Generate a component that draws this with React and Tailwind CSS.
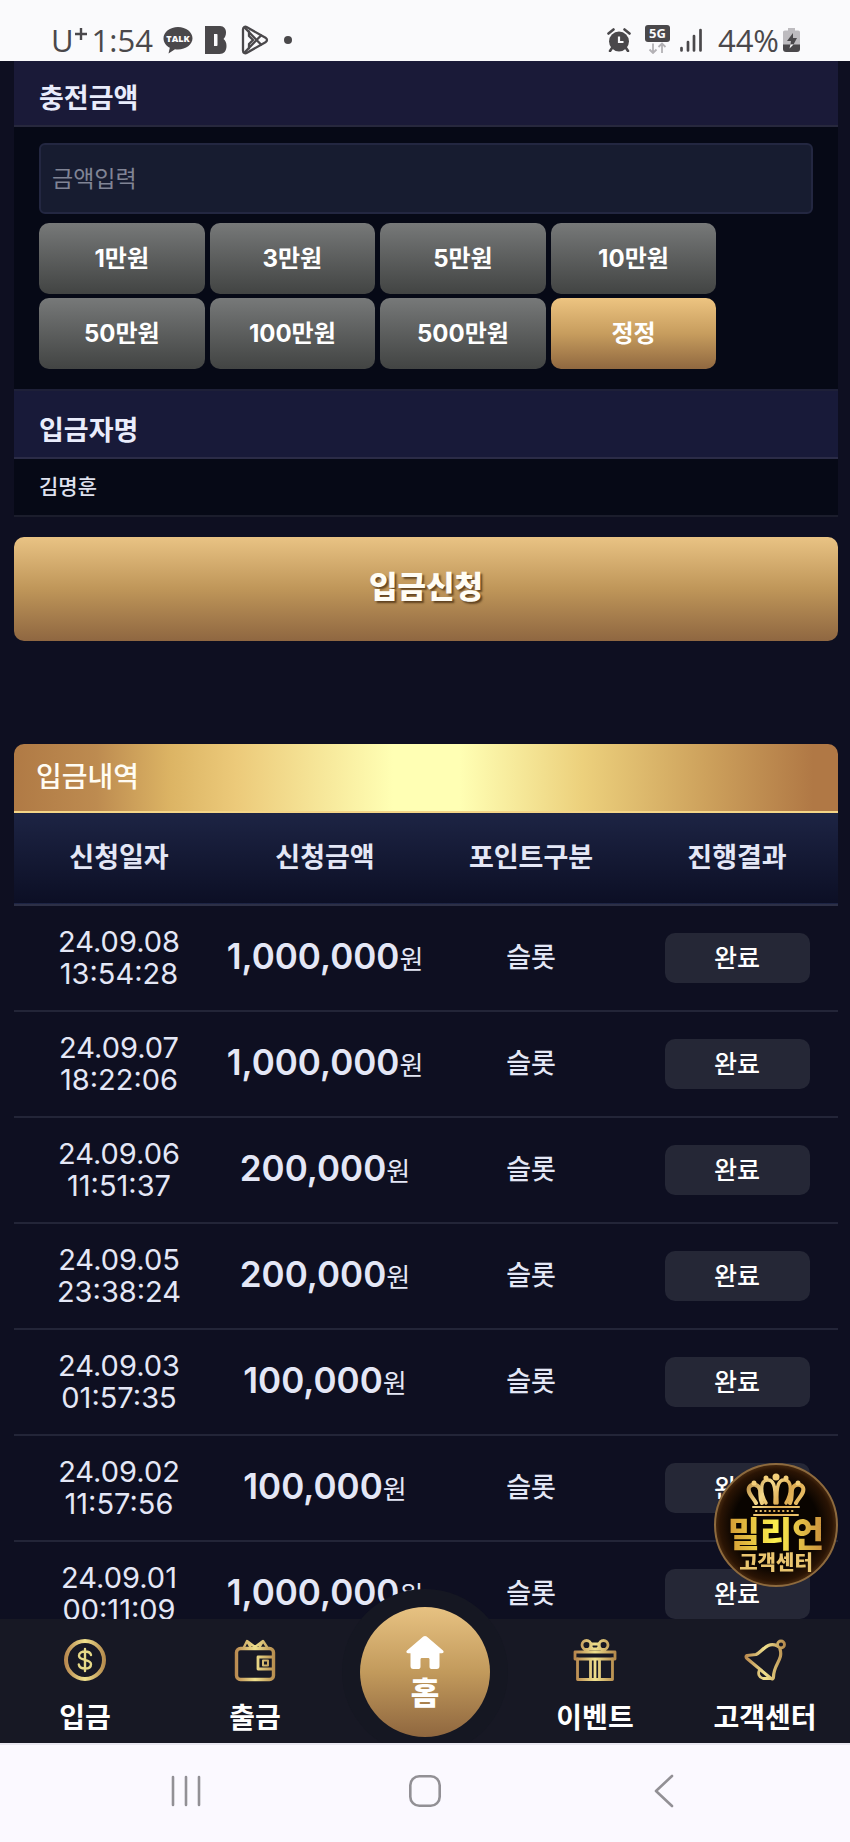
import React, { useState } from 'react';

const AMOUNTS = [
  { label: '1만원', value: 10000 },
  { label: '3만원', value: 30000 },
  { label: '5만원', value: 50000 },
  { label: '10만원', value: 100000 },
  { label: '50만원', value: 500000 },
  { label: '100만원', value: 1000000 },
  { label: '500만원', value: 5000000 },
];

const HISTORY = [
  { date: '24.09.08', time: '13:54:28', amount: '1,000,000' },
  { date: '24.09.07', time: '18:22:06', amount: '1,000,000' },
  { date: '24.09.06', time: '11:51:37', amount: '200,000' },
  { date: '24.09.05', time: '23:38:24', amount: '200,000' },
  { date: '24.09.03', time: '01:57:35', amount: '100,000' },
  { date: '24.09.02', time: '11:57:56', amount: '100,000' },
  { date: '24.09.01', time: '00:11:09', amount: '1,000,000' },
];

function StatusBar() {
  return (
    <header className="flex h-[61px] shrink-0 items-end justify-between bg-[#fafafc] pr-[50px] pb-[3px] pl-[51px] font-['Open_Sans','Noto_Sans_CJK_KR',sans-serif] text-[31px] leading-9 text-[#4a484b]">
      <div className="flex items-center">
        <span>U</span>
        <svg className="mb-3 h-[14px] w-[14px]" viewBox="0 0 14 14" fill="none" stroke="currentColor" strokeWidth="2.4">
          <path d="M7 1v12M1 7h12" />
        </svg>
        <span className="ml-1">1:54</span>
        <svg className="ml-[10px] h-7 w-[30px]" viewBox="0 0 30 28">
          <path d="M15 1C7 1 .5 6 .5 12.300c0 4 2.500 7.500 6.300 9.500L5.500 27.500l6.500-4.200c1 .1 2 .2 3 .2 8 0 14.500-5 14.500-11.200S23 1 15 1z" fill="currentColor" />
          <text x="15" y="16" textAnchor="middle" fontSize="9" fontWeight="800" fill="#fafafc">TALK</text>
        </svg>
        <svg className="ml-3 h-7 w-[22px]" viewBox="0 0 22 28">
          <path fillRule="evenodd" d="M0 0h15c4 0 6 3 6 6.500 0 3-1 5-2.500 6.500 2 1.500 3 4 3 7 0 5-2.500 8-7 8H0zM9 8v12h2.500c1 0 1-.6 1-1.500V9.500c0-1 0-1.500-1-1.500z" fill="currentColor" />
        </svg>
        <svg className="ml-[14px] h-[30px] w-7" viewBox="0 0 28 30" fill="none" stroke="currentColor" strokeWidth="2.3" strokeLinejoin="round" strokeLinecap="round">
          <path d="M2 4.500v21c0 2.500 2 3.500 4 2.300l18.500-10.600c2-1.200 2-3.200 0-4.400L6 2.200C4 1 2 2 2 4.500z" />
          <path d="M4 3l16 16.500M4 27l16-16.500M8 6.500V11l4 4-4 4v4.500" />
        </svg>
        <span className="ml-[15px] h-2 w-2 rounded-full bg-[#4a484b]" />
      </div>
      <div className="flex items-center">
        <svg className="h-6 w-6" viewBox="0 0 24 24" fill="none" stroke="currentColor">
          <circle cx="12" cy="13.500" r="10" fill="currentColor" stroke="none" />
          <path d="M1.500 5.500l5-4M22.500 5.500l-5-4" strokeWidth="2.600" strokeLinecap="round" />
          <path d="M5 20l-2 3M19 20l2 3" strokeWidth="2.600" strokeLinecap="round" />
          <path d="M12 8.500v5.500h4.500" stroke="#fafafc" strokeWidth="2.200" />
        </svg>
        <svg className="mb-1 ml-[14px] h-8 w-[25px]" viewBox="0 -4 25 32">
          <rect y="-1" width="25" height="17" rx="3" fill="currentColor" />
          <text x="12.500" y="12" textAnchor="middle" fontSize="13" fontWeight="700" fill="#fafafc">5G</text>
          <path d="M8 17.500v9M4.500 23.500L8 27l3.500-3.500M17 27v-9M13.500 21l3.500-3.500 3.500 3.500" fill="none" stroke="#b3b1b5" strokeWidth="1.800" />
        </svg>
        <svg className="ml-[10px] h-6 w-[22px]" viewBox="0 0 22 24" stroke="currentColor" strokeWidth="2.700" strokeLinecap="round">
          <path d="M1.500 20v2.500M8 14v8.500M14 8v14.500M20.500 2v20.500" />
        </svg>
        <span className="ml-4">44%</span>
        <svg className="ml-1 h-6 w-[17px]" viewBox="0 0 17 24">
          <path d="M5 0h7v2.500h3c1.500 0 2 .8 2 2V17H0V4.500c0-1.200.5-2 2-2h3z" fill="#bdbbbf" />
          <path d="M0 16.500h17V21c0 2-1 3-3 3H3c-2 0-3-1-3-3z" fill="currentColor" />
          <path d="M10 5L4 13h4l-.5 3.500h3L14 10h-4z" fill="currentColor" />
          <path d="M7.500 16.500l-1 4 4-4z" fill="#fafafc" />
        </svg>
      </div>
    </header>
  );
}

function GoldDefs() {
  return (
    <svg className="absolute h-0 w-0" aria-hidden="true">
      <defs>
        <linearGradient id="gold" x1="0" y1="0" x2="40" y2="0" gradientUnits="userSpaceOnUse">
          <stop offset="0" stopColor="#b8874e" />
          <stop offset="0.5" stopColor="#efe08d" />
          <stop offset="1" stopColor="#b58a4c" />
        </linearGradient>
        <linearGradient id="crown" x1="0" y1="0" x2="60" y2="44" gradientUnits="userSpaceOnUse">
          <stop offset="0" stopColor="#a8742a" />
          <stop offset="0.35" stopColor="#f5d98b" />
          <stop offset="0.6" stopColor="#dca94f" />
          <stop offset="1" stopColor="#f3cf78" />
        </linearGradient>
      </defs>
    </svg>
  );
}

function TabIcon({ children }) {
  return (
    <svg className="h-11 w-11" viewBox="-2 -2 44 44" fill="none" stroke="url(#gold)" strokeWidth="2.800" strokeLinejoin="round" strokeLinecap="round">
      {children}
    </svg>
  );
}

function TabLink({ label, children }) {
  return (
    <a href="#" className="flex flex-1 flex-col items-center gap-[18px] pt-[19px]">
      {children}
      <span className="text-[28px] leading-9 font-bold text-white">{label}</span>
    </a>
  );
}

function TabBar() {
  return (
    <nav className="relative flex h-[124px] shrink-0 bg-[#171824]">
      <TabLink label="입금">
        <TabIcon>
          <circle cx="20" cy="20" r="19" strokeWidth="4" />
          <path d="M20 9v22M26 15c-.5-2.500-3-3.500-6-3.500s-6 1.200-6 4.200c0 5.500 12 2.800 12 8.500 0 3-3 4.300-6 4.300s-5.800-1.200-6.200-4" strokeWidth="2.400" stroke="#e6d988" />
        </TabIcon>
      </TabLink>
      <TabLink label="출금">
        <TabIcon>
          <rect x="1.500" y="8.500" width="37" height="31" rx="4" strokeWidth="3.400" />
          <path d="M9 7l3-6 8 6 8-6 4 6M13 3l3 5M27 3l-3 5" strokeWidth="2.400" />
          <path d="M38 17H23v12h15" />
          <rect x="28" y="20.500" width="5" height="5" strokeWidth="2" />
        </TabIcon>
      </TabLink>
      <div className="flex flex-1 justify-center">
        <a
          href="#"
          className="-mt-3 flex h-[130px] w-[130px] flex-col items-center rounded-full bg-linear-to-b from-[#e7c282] via-[#c29a5c] to-[#8f673f] pt-7 ring-[18px] ring-[#151722]"
        >
          <svg className="h-9 w-[38px]" viewBox="0 0 38 36" fill="#fff">
            <path d="M17.300 1.500L1 15.500c-1.200 1.200-.6 2.800 1 2.800h2.500V31c0 2 .8 3 2.800 3h5.200c1.500 0 2-1 2-2.200v-7.300c0-1 .5-1.500 1.500-1.500h6c1 0 1.500.5 1.500 1.500v7.300c0 1.200.5 2.200 2 2.200h5.200c2 0 2.800-1 2.800-3V18.300H36c1.600 0 2.200-1.600 1-2.800L20.700 1.500c-1-.8-2.400-.8-3.400 0z" />
          </svg>
          <span className="mt-1 text-[31px] leading-9 font-black text-white">홈</span>
        </a>
      </div>
      <TabLink label="이벤트">
        <TabIcon>
          <rect x="0" y="12" width="40" height="7" />
          <path d="M2.500 19v20.500h35V19M15.500 20v19M24.500 20v19M20 20v19" />
          <circle cx="11.500" cy="5" r="4.500" />
          <circle cx="28.500" cy="5" r="4.500" />
          <path d="M16 4h8v5h-8zM10 11l7-3M30 11l-7-3" />
        </TabIcon>
      </TabLink>
      <TabLink label="고객센터">
        <TabIcon>
          <circle cx="36" cy="4.500" r="3.500" />
          <path d="M32.500 6C22 1 17 12 11 14.500l-9 1c-1.500.6-1 2.200 0 3l24 20c1.500 1 2.500 0 2.500-1.500 0-13 10-17 6.500-28" strokeWidth="3.200" />
          <path d="M14.500 30c-2 3.500-.5 7.500 3.500 8.500h8" />
        </TabIcon>
      </TabLink>
    </nav>
  );
}

function SystemNav() {
  return (
    <div className="relative z-10 flex h-[99px] shrink-0 items-center border-t-2 border-[#e9e7f0] bg-[#fbf9ff] px-[67px] pb-[6px] text-[#929095]">
      <button type="button" aria-label="최근 앱" className="flex flex-1 justify-center">
        <svg className="h-8 w-8" viewBox="0 0 32 32" stroke="currentColor" strokeWidth="2.600" strokeLinecap="round">
          <path d="M3 2v28M16 2v28M29 2v28" />
        </svg>
      </button>
      <button type="button" aria-label="홈 화면" className="flex flex-1 justify-center">
        <svg className="h-8 w-8" viewBox="0 0 32 32" fill="none" stroke="currentColor" strokeWidth="2.600">
          <rect x="1.300" y="1.300" width="29.400" height="29.400" rx="9" />
        </svg>
      </button>
      <button type="button" aria-label="뒤로" className="flex flex-1 justify-center">
        <svg className="h-[34px] w-5" viewBox="0 0 20 34" fill="none" stroke="currentColor" strokeWidth="2.600" strokeLinecap="round" strokeLinejoin="round">
          <path d="M18 2L2 17l16 15" />
        </svg>
      </button>
    </div>
  );
}

function SupportBadge() {
  return (
    <a
      href="#"
      className="fixed right-3 bottom-[255px] z-20 flex h-[124px] w-[124px] flex-col items-center rounded-full border-2 border-[#8d6a3e] bg-[radial-gradient(circle,#090400_50%,#2a1404_66%,#4a2b10_72%)] pt-2"
    >
      <svg className="h-11 w-[60px] shrink-0" viewBox="0 0 60 44" fill="none" stroke="url(#crown)" strokeWidth="4" strokeLinecap="round">
        <path d="M10 30C7 24 1 20 3 14.500 5 10 13 11 14 17c.6 4-.5 8 2 13" />
        <path d="M50 30c3-6 9-10 7-15.500C55 10 47 11 46 17c-.6 4 .5 8-2 13" />
        <path d="M20 30c-6-10-6-22 1-23 6-1 9 5 8 23" strokeWidth="3.500" />
        <path d="M40 30c6-10 6-22-1-23-6-1-9 5-8 23" strokeWidth="3.500" />
        <path d="M7 34h46M8 42h44" strokeWidth="2" />
        <path d="M10 38h40" strokeWidth="2" strokeDasharray="0.500 4" />
        <g fill="#f5d07a" stroke="none">
          <circle cx="30" cy="4" r="3.500" />
          <circle cx="20" cy="5" r="2.500" />
          <circle cx="40" cy="5" r="2.500" />
          <circle cx="8" cy="10" r="2.500" />
          <circle cx="52" cy="10" r="2.500" />
        </g>
      </svg>
      <span className="bg-linear-to-r from-[#d39a35] via-[#fbf04e] to-[#c98f3c] bg-clip-text text-[35px] leading-[34px] font-black text-transparent">밀리언</span>
      <span className="text-[20px] leading-6 font-black text-[#e9c56f]">고객센터</span>
    </a>
  );
}

function DepositForm() {
  const [amount, setAmount] = useState('');
  const add = (value) => setAmount((prev) => String(Number(prev || 0) + value));

  return (
    <form onSubmit={(e) => e.preventDefault()}>
      <div className="border-b-2 border-[#27283d] bg-[#1a1a38] px-[25px] pt-5 pb-2 text-[27px] leading-9 font-bold text-[#e9ecfb]">
        <label htmlFor="amount">충전금액</label>
      </div>
      <div className="bg-[#060916] px-[25px] pt-4 pb-5">
        <input
          id="amount"
          type="text"
          placeholder="금액입력"
          value={amount}
          onChange={(e) => setAmount(e.target.value)}
          className="h-[71px] w-full rounded-md border-2 border-[#232741] bg-[#171c30] px-[11px] text-[23px] text-white placeholder:text-[#808495]"
        />
        <div className="mt-[9px] grid w-7/8 grid-cols-4 gap-x-[5px] gap-y-1 text-[24px] font-bold text-white text-shadow-[2px_2px_2px_rgba(0,0,0,0.5)]">
          {AMOUNTS.map((item) => (
            <button
              key={item.value}
              type="button"
              onClick={() => add(item.value)}
              className="h-[71px] rounded-[10px] bg-linear-to-b from-[#777979] to-[#424443]"
            >
              {item.label}
            </button>
          ))}
          <button
            type="button"
            onClick={() => setAmount('')}
            className="h-[71px] rounded-[10px] bg-linear-to-b from-[#edc481] via-[#c79d5e] to-[#906840]"
          >
            정정
          </button>
        </div>
      </div>
      <h2 className="border-t-2 border-b-2 border-t-[#1e2038] border-b-[#2b2c47] bg-[#181a39] px-[25px] pt-[22px] pb-2 text-[27px] leading-9 font-bold text-[#e9ecfb]">
        입금자명
      </h2>
      <p className="border-b-2 border-[#1b1d2c] bg-[#060916] px-[25px] py-3 text-[21px] leading-8 font-medium text-[#dfe1ee]">김명훈</p>
      <button
        type="submit"
        className="mt-5 h-[104px] w-full rounded-[10px] bg-linear-to-b from-[#e9c384] via-[#bf9659] to-[#8f6741] pb-1 text-[31px] font-black text-[#fffdf5] text-shadow-[2px_2px_2px_rgba(60,35,10,0.7)]"
      >
        입금신청
      </button>
    </form>
  );
}

function DepositHistory() {
  return (
    <section className="mt-[103px]">
      <h2 className="rounded-t-[10px] border-b-2 border-[#f4d587] bg-[linear-gradient(90deg,#b07a45_0%,#bd8b50_10%,#dcb464_19%,#ecca7a_27%,#ffffb4_46%,#ffffb4_54%,#ecd07c_69%,#cda15c_84%,#b07845_97%)] px-[22px] pt-[15px] pb-4 text-[28px] leading-9 font-medium text-[#fffcf3]">
        입금내역
      </h2>
      <table className="w-full table-fixed border-collapse text-center text-[#e4e7f6]">
        <thead>
          <tr className="h-[92px] border-b-2 border-[#2d3046] bg-linear-to-b from-[#1d2444] to-[#0c0f25] text-[27px]">
            <th className="pl-1 font-bold">신청일자</th>
            <th className="pl-1 font-bold">신청금액</th>
            <th className="pl-1 font-bold">포인트구분</th>
            <th className="pl-1 font-bold">진행결과</th>
          </tr>
        </thead>
        <tbody>
          {HISTORY.map((item) => (
            <tr key={item.date} className="h-[106px] border-b-2 border-[#232538]">
              <td className="pl-1 text-[29px] leading-8">
                {item.date}
                <br />
                {item.time}
              </td>
              <td className="pl-1 text-[26px] leading-10 whitespace-nowrap">
                <span className="text-[35px] font-semibold">{item.amount}</span>원
              </td>
              <td className="pl-1 text-[27px] font-medium">슬롯</td>
              <td className="pl-1">
                <span className="inline-block w-[145px] rounded-[10px] bg-[#252736] py-[7px] align-middle text-[25px] leading-9 font-medium text-white">완료</span>
              </td>
            </tr>
          ))}
        </tbody>
      </table>
    </section>
  );
}

export default function App() {
  return (
    <div className="flex h-screen flex-col bg-[#0e0f21] font-[Inter,'Noto_Sans_CJK_KR',sans-serif]">
      <GoldDefs />
      <StatusBar />
      <main className="min-h-0 flex-1 overflow-y-auto pr-3 pl-[14px] [scrollbar-width:none]">
        <DepositForm />
        <DepositHistory />
      </main>
      <SupportBadge />
      <TabBar />
      <SystemNav />
    </div>
  );
}
